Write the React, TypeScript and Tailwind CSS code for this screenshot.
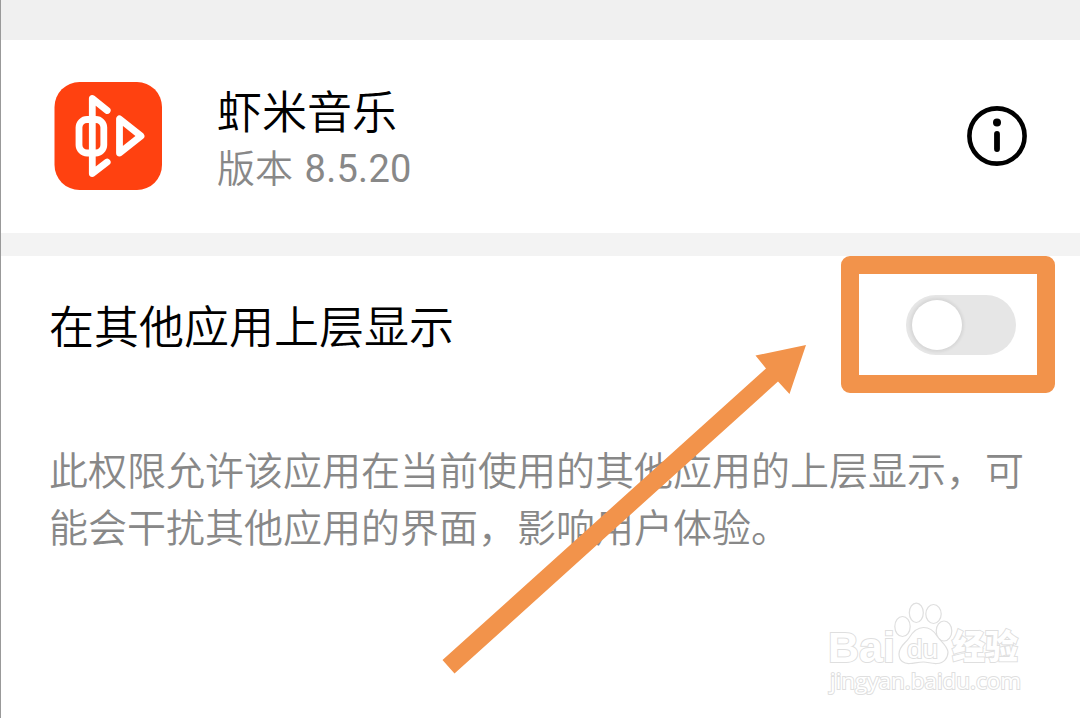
const APP = {
  name: "虾米音乐",
  version: "8.5.20",
};

const AppLogo: React.FC = () => (
  <svg viewBox="0 0 108 108" className="h-[108px] w-[108px] shrink-0" fill="none">
    <rect x="0.500" width="107.500" height="108" rx="25" fill="#ff4110" />
    <g stroke="#fff" strokeWidth="6.800" strokeLinecap="round" strokeLinejoin="round">
      <path d="M53.200 28.500 38.300 16.500V91.500L53.200 80" />
      <rect x="25" y="37.500" width="24.800" height="33.500" rx="8" />
      <path d="M65.500 36.800V71L87 54Z" />
    </g>
  </svg>
);

const InfoIcon: React.FC = () => (
  <svg viewBox="0 0 60 60" className="h-[60px] w-[60px]" fill="none">
    <circle cx="30" cy="30" r="27.600" stroke="#000" strokeWidth="4.600" />
    <circle cx="30" cy="16.500" r="4" fill="#000" />
    <path d="M30 28V43" stroke="#000" strokeWidth="5.800" strokeLinecap="round" />
  </svg>
);

const Arrow: React.FC = () => (
  <svg viewBox="0 0 364 330" className="absolute left-[441px] top-[344px] h-[330px] w-[364px]">
    <path d="M0.500 316 324 24.500 313.500 11.500 364 1 347.500 50 336 37.500 12.500 329.500Z" fill="#f2934b" />
  </svg>
);

const Watermark: React.FC = () => (
  <svg
    viewBox="0 0 210 100"
    className="absolute left-[819px] top-[600px] h-[100px] w-[210px]"
    fill="#fff"
    stroke="#dfdfdf"
    strokeWidth="1.200"
  >
    <text x="8" y="62" fontSize="43" strokeWidth="2" textLength="67" lengthAdjust="spacingAndGlyphs" className="font-['Liberation_Sans',sans-serif] font-bold [paint-order:stroke]">Bai</text>
    <text x="132" y="59" fontSize="34" strokeWidth="2" textLength="66" lengthAdjust="spacingAndGlyphs" className="font-['Noto_Sans_CJK_SC',sans-serif] font-black [paint-order:stroke]">经验</text>
    <ellipse cx="82.500" cy="26.500" rx="7.700" ry="10" />
    <ellipse cx="96.300" cy="12.800" rx="7" ry="9.700" />
    <ellipse cx="113.500" cy="14" rx="7.700" ry="9.500" />
    <ellipse cx="124" cy="31" rx="7.800" ry="10" />
    <path d="M103.500 27.500C96 27.500 92 33 89 38 85 44 79 46 79 54 79 61 84 64 90 63.500 95 63 99 62 103.500 62 108 62 112 64 117 63.500 124 63 128 58 128 52 127 45 121 42 117 36 114 31 110 27.500 103.500 27.500Z" />
    <text x="87" y="58" fontSize="26" strokeWidth="2" textLength="31" lengthAdjust="spacingAndGlyphs" className="font-['Liberation_Sans',sans-serif] font-normal [paint-order:stroke]">du</text>
    <text x="10" y="89" fontSize="22" strokeWidth="2" textLength="191" lengthAdjust="spacingAndGlyphs" className="font-['Open_Sans',sans-serif] font-medium [paint-order:stroke]">jingyan.baidu.com</text>
  </svg>
);

const App: React.FC = () => {
  return (
    <div className="relative flex h-[718px] w-[1080px] flex-col overflow-hidden border-l border-[#999] bg-white font-['Noto_Sans_CJK_SC',sans-serif] font-[350]">
      <div className="h-10 shrink-0 bg-[#f0f0f0]" />
      <header className="flex h-[193px] shrink-0 items-center pb-px pl-[53px] pr-[53px]">
        <AppLogo />
        <div className="ml-[55px] flex-1">
          <h1 className="h-[60px] text-[45px] leading-[62px] text-black">{APP.name}</h1>
          <p className="h-[54px] text-[38px] leading-[54px] text-[#888]">
            版本 <span className="ml-[3px] font-['Roboto',sans-serif] font-normal tracking-[0.3px]">{APP.version}</span>
          </p>
        </div>
        <button type="button" aria-label="应用信息">
          <InfoIcon />
        </button>
      </header>
      <div className="h-[23px] shrink-0 bg-[#f3f3f3]" />
      <main>
        <div className="flex h-[138px] items-center justify-between pl-12 pr-16">
          <h2 className="text-[45px] leading-[60px] text-black">在其他应用上层显示</h2>
          <button type="button" role="switch" aria-checked="false" aria-label="在其他应用上层显示" className="flex h-[60px] w-[110px] items-center rounded-full bg-[#e6e6e6] pl-[6px]">
            <span className="h-[50px] w-[50px] rounded-full bg-white shadow-[0_0_3px_2px_rgba(0,0,0,0.07)]" />
          </button>
        </div>
        <p className="mt-[46px] whitespace-nowrap pl-12 text-[39px] leading-[57px] text-[#888]">
          此权限允许该应用在当前使用的其他应用的上层显示，可
          <br />
          能会干扰其他应用的界面，影响用户体验。
        </p>
      </main>
      {/* callout drawn over the switch */}
      <div className="absolute left-[840px] top-[256px] h-[137px] w-[214px] rounded-[9px] border-[18px] border-[#f2934b]" />
      <Arrow />
      <Watermark />
    </div>
  );
};

export default App;
